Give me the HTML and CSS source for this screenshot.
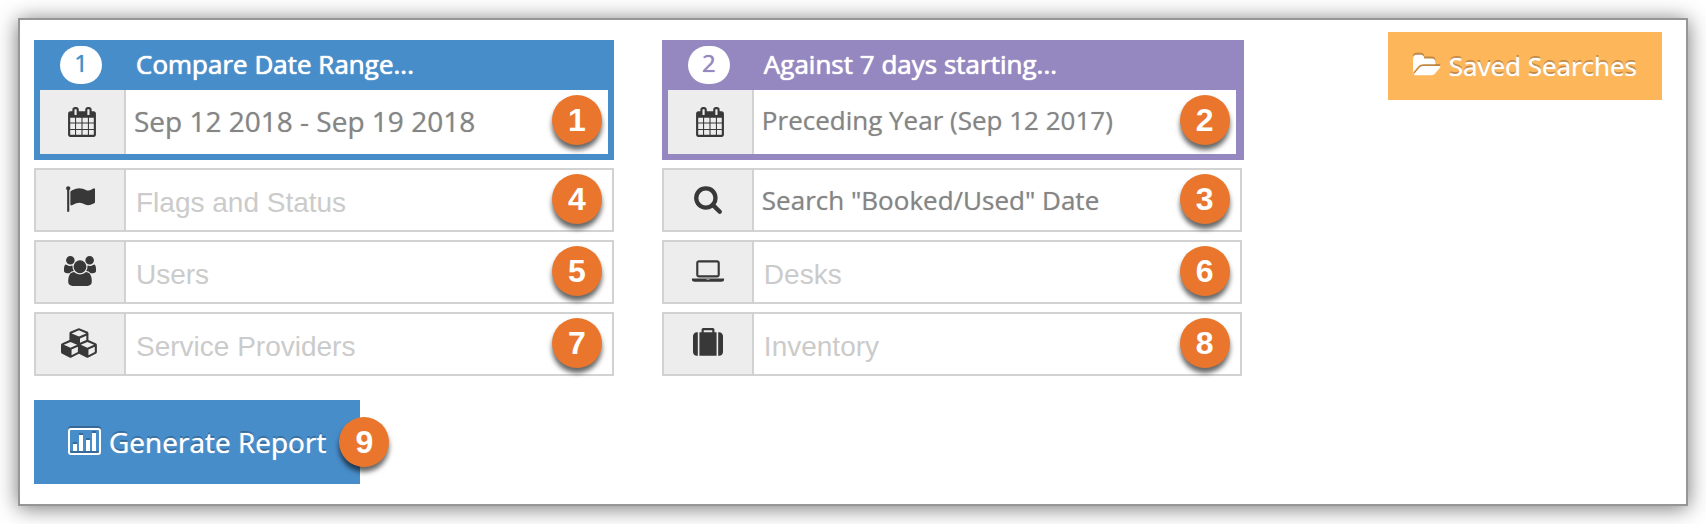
FILE: index.html
```html
<!DOCTYPE html>
<html lang="en">
<head>
<meta charset="utf-8">
<meta name="viewport" content="width=device-width, initial-scale=1">
<title>Compare Report</title>
<link rel="stylesheet" href="styles.css">
</head>
<body>
<svg class="sprite" aria-hidden="true">
  <symbol id="i-calendar" viewBox="0 0 1792 1792"><path d="M192 1664h288v-288h-288v288zm352 0h320v-288h-320v288zm-352-352h288v-320h-288v320zm352 0h320v-320h-320v320zm-352-384h288v-288h-288v288zm736 736h320v-288h-320v288zm-384-736h320v-288h-320v288zm768 736h288v-288h-288v288zm-384-352h320v-320h-320v320zm-352-864v-288q0-13-9.5-22.5t-22.5-9.5h-64q-13 0-22.5 9.5t-9.5 22.5v288q0 13 9.5 22.5t22.5 9.5h64q13 0 22.5-9.5t9.5-22.5zm736 864h288v-320h-288v320zm-384-384h320v-288h-320v288zm384 0h288v-288h-288v288zm32-480v-288q0-13-9.5-22.5t-22.5-9.5h-64q-13 0-22.5 9.5t-9.5 22.5v288q0 13 9.5 22.5t22.5 9.5h64q13 0 22.5-9.5t9.5-22.5zm384-64v1280q0 52-38 90t-90 38h-1408q-52 0-90-38t-38-90v-1280q0-52 38-90t90-38h128v-96q0-66 47-113t113-47h64q66 0 113 47t47 113v96h384v-96q0-66 47-113t113-47h64q66 0 113 47t47 113v96h128q52 0 90 38t38 90z"/></symbol>
  <symbol id="i-flag" viewBox="0 0 1792 1792"><path d="M320 256q0 72-64 110v1266q0 13-9.5 22.5t-22.5 9.5h-64q-13 0-22.5-9.5t-9.5-22.5v-1266q-64-38-64-110 0-53 37.5-90.5t90.5-37.5 90.5 37.5 37.5 90.5zm1472 64v763q0 25-12.5 38.5t-39.5 27.5q-215 116-369 116-61 0-123.5-22t-108.5-48-115.5-48-142.5-22q-192 0-464 146-17 9-33 9-26 0-45-19t-19-45v-742q0-32 31-55 21-14 79-43 236-120 421-120 107 0 200 29t219 88q38 19 88 19 54 0 117.5-21t110-47 88-47 54.5-21q26 0 45 19t19 45z"/></symbol>
  <symbol id="i-search" viewBox="0 0 1792 1792"><path d="M1216 832q0-185-131.5-316.5t-316.5-131.5-316.5 131.5-131.5 316.5 131.5 316.5 316.5 131.5 316.5-131.5 131.5-316.5zm512 832q0 52-38 90t-90 38q-54 0-90-38l-343-342q-179 124-399 124-143 0-273.5-55.5t-225-150-150-225-55.5-273.5 55.5-273.5 150-225 225-150 273.5-55.5 273.5 55.5 225 150 150 225 55.5 273.5q0 220-124 399l343 343q37 37 37 90z"/></symbol>
  <symbol id="i-users" viewBox="0 0 1920 1792"><path d="M593 896q-162 5-265 128h-134q-82 0-138-40.5t-56-118.5q0-353 124-353 6 0 43.500 21t97.500 42.500 119 21.500q67 0 133-23-5 37-5 66 0 139 81 256zm1071 637q0 120-73 189.500t-194 69.500h-874q-121 0-194-69.500t-73-189.500q0-53 3.500-103.500t14-109 26.500-108.500 43-97.500 62-81 85.500-53.500 111.500-20q10 0 43 21.500t73 48 107 48 135 21.500 135-21.500 107-48 73-48 43-21.500q61 0 111.500 20t85.500 53.500 62 81 43 97.500 26.500 108.500 14 109 3.500 103.500zm-1024-1277q0 106-75 181t-181 75-181-75-75-181 75-181 181-75 181 75 75 181zm704 384q0 159-112.500 271.500t-271.500 112.500-271.500-112.500-112.500-271.500 112.500-271.500 271.500-112.500 271.500 112.500 112.500 271.500zm576 225q0 78-56 118.500t-138 40.500h-134q-103-123-265-128 81-117 81-256 0-29-5-66 66 23 133 23 59 0 119-21.500t97.500-42.500 43.500-21q124 0 124 353zm-128-609q0 106-75 181t-181 75-181-75-75-181 75-181 181-75 181 75 75 181z"/></symbol>
  <symbol id="i-laptop" viewBox="0 0 1920 1792"><path d="M416 1280q-66 0-113-47t-47-113v-704q0-66 47-113t113-47h1088q66 0 113 47t47 113v704q0 66-47 113t-113 47h-1088zm-32-864v704q0 13 9.500 22.500t22.500 9.500h1088q13 0 22.500-9.500t9.500-22.500v-704q0-13-9.500-22.500t-22.500-9.500h-1088q-13 0-22.500 9.500t-9.500 22.500zm1376 928h160v96q0 40-47 68t-113 28h-1600q-66 0-113-28t-47-68v-96h1760zm-720 96q16 0 16-16t-16-16h-160q-16 0-16 16t16 16h160z"/></symbol>
  <symbol id="i-cubes" viewBox="0 0 2304 1792"><path d="M640 1632l384-192v-314l-384 164v342zm-64-454l404-173-404-173-404 173zm1088 454l384-192v-314l-384 164v342zm-64-454l404-173-404-173-404 173zm-448-293l384-165v-266l-384 164v267zm-64-379l441-189-441-189-441 189zm1088 518v416q0 36-19 67t-52 47l-448 224q-25 14-57 14t-57-14l-448-224q-5-2-7-4-2 2-7 4l-448 224q-25 14-57 14t-57-14l-448-224q-33-16-52-47t-19-67v-416q0-38 21.500-70t56.500-48l434-186v-400q0-38 21.500-70t56.500-48l448-192q23-10 50-10t50 10l448 192q35 16 56.500 48t21.500 70v400l434 186q36 16 57 48t21 70z"/></symbol>
  <symbol id="i-suitcase" viewBox="0 0 1792 1792"><path d="M640 256h512v-128h-512v128zm-352 0v1408h-64q-92 0-158-66t-66-158v-960q0-92 66-158t158-66h64zm1120 0v1408h-1024v-1408h128v-160q0-40 28-68t68-28h576q40 0 68 28t28 68v160h128zm384 224v960q0 92-66 158t-158 66h-64v-1408h64q92 0 158 66t66 158z"/></symbol>
  <symbol id="i-folder" viewBox="0 0 1920 1792"><path d="M1879 952q0 31-31 66l-336 396q-43 51-120.500 86.500t-143.500 35.500h-1088q-34 0-60.500-13t-26.500-43q0-31 31-66l336-396q43-51 120.500-86.500t143.500-35.500h1088q34 0 60.500 13t26.500 43zm-343-344v160h-832q-94 0-197 47.500t-164 119.500l-337 396-5 6q0-4-.5-12.500t-.5-12.500v-960q0-92 66-158t158-66h320q92 0 158 66t66 158v32h544q92 0 158 66t66 158z"/></symbol>
  <symbol id="i-chart" viewBox="0 0 33 28"><rect x="1" y="1" width="31" height="25" rx="2" fill="none" stroke="currentColor" stroke-width="2"/><path d="M5 16h4v7H5zM11 7h4v16h-4zM18 12h4v11h-4zM24 5h4v18h-4z"/></symbol>
</svg>

<main class="panel">
  <form class="report">
    <div class="filters">
      <section class="range range--compare">
        <h2 class="range-head"><span class="step">1</span><span>Compare Date Range...</span></h2>
        <div class="field">
          <label class="addon" for="dates"><svg class="icon"><use href="#i-calendar"/></svg></label>
          <input class="control control--date" id="dates" type="text" aria-label="Date range" value="Sep 12 2018 - Sep 19 2018">
          <span class="badge">1</span>
        </div>
      </section>
      <section class="range range--against">
        <h2 class="range-head"><span class="step">2</span><span>Against 7 days starting...</span></h2>
        <div class="field">
          <label class="addon" for="against"><svg class="icon"><use href="#i-calendar"/></svg></label>
          <select class="control control--select" id="against" aria-label="Against"><option>Preceding Year (Sep 12 2017)</option></select>
          <span class="badge">2</span>
        </div>
      </section>
      <div class="field field--boxed">
        <label class="addon" for="flags"><svg class="icon"><use href="#i-flag"/></svg></label>
        <input class="control" id="flags" type="text" aria-label="Flags and Status" placeholder="Flags and Status">
        <span class="badge">4</span>
      </div>
      <div class="field field--boxed">
        <label class="addon" for="datetype"><svg class="icon"><use href="#i-search"/></svg></label>
        <select class="control control--select" id="datetype" aria-label="Search date"><option>Search "Booked/Used" Date</option></select>
        <span class="badge">3</span>
      </div>
      <div class="field field--boxed">
        <label class="addon" for="users"><svg class="icon icon--wide"><use href="#i-users"/></svg></label>
        <input class="control" id="users" type="text" aria-label="Users" placeholder="Users">
        <span class="badge">5</span>
      </div>
      <div class="field field--boxed">
        <label class="addon" for="desks"><svg class="icon icon--wide"><use href="#i-laptop"/></svg></label>
        <input class="control" id="desks" type="text" aria-label="Desks" placeholder="Desks">
        <span class="badge">6</span>
      </div>
      <div class="field field--boxed">
        <label class="addon" for="providers"><svg class="icon icon--widest"><use href="#i-cubes"/></svg></label>
        <input class="control" id="providers" type="text" aria-label="Service Providers" placeholder="Service Providers">
        <span class="badge">7</span>
      </div>
      <div class="field field--boxed">
        <label class="addon" for="inventory"><svg class="icon"><use href="#i-suitcase"/></svg></label>
        <input class="control" id="inventory" type="text" aria-label="Inventory" placeholder="Inventory">
        <span class="badge">8</span>
      </div>
    </div>
    <div class="submit">
      <button class="btn btn--primary" type="submit"><svg class="icon-chart"><use href="#i-chart"/></svg>Generate Report</button>
      <span class="badge badge--edge">9</span>
    </div>
  </form>
  <button class="btn btn--saved" type="button"><svg class="icon-folder"><use href="#i-folder"/></svg>Saved Searches</button>
</main>
</body>
</html>
```
FILE: styles.css
```css
* { box-sizing: border-box; }

body {
  margin: 0;
  padding: 18px;
  background: #fff;
  font-family: "Open Sans", "Noto Sans", sans-serif;
  font-size: 26px;
}

.sprite { display: none; }

svg { fill: currentColor; flex: none; }

.panel {
  display: flex;
  align-items: flex-start;
  justify-content: space-between;
  gap: 146px;
  padding: 12px 24px 20px 14px;
  border: 2px solid #969696;
  background: #fff;
  box-shadow: 0 2px 20px rgba(0, 0, 0, 0.55);
}

.report {
  flex: 1;
  min-width: 0;
  padding-top: 8px;
}

.filters {
  display: grid;
  grid-template-columns: 1fr 1fr;
  gap: 8px 48px;
}

.range {
  border: 6px solid;
  border-top: 0;
}

.range--compare { border-color: #478dca; background: #478dca; color: #478dca; }

.range--against {
  margin-right: -2px;
  border-color: #9587bf;
  border-right-width: 8px;
  background: #9587bf;
  color: #9587bf;
}

.range-head {
  display: flex;
  align-items: center;
  gap: 34px;
  height: 50px;
  margin: 0;
  padding: 0 0 2px 20px;
  color: #fff;
  font-size: 26px;
  font-weight: 500;
  text-shadow: 0 0 1px currentColor, 0 0 1px currentColor;
}

.step {
  width: 42px;
  height: 38px;
  margin-top: 2px;
  border-radius: 19px;
  background: #fff;
  font-size: 24px;
  line-height: 34px;
  text-align: center;
  text-shadow: 0 0 1px currentColor;
}

.range--compare .step { color: #478dca; }
.range--against .step { color: #9587bf; }

.field {
  position: relative;
  display: flex;
  height: 64px;
  background: #fff;
}

.field--boxed { border: 2px solid #d2d2d2; }

.addon {
  display: flex;
  align-items: center;
  justify-content: center;
  flex: none;
  width: 86px;
  border-right: 2px solid #d2d2d2;
  background: #ededed;
  color: #383838;
}

.field--boxed .addon {
  width: 90px;
  padding-bottom: 2px;
}

.icon { width: 30px; height: 30px; }
.icon--wide { width: 34px; }
.icon--widest { width: 38px; }

.control {
  flex: 1;
  min-width: 0;
  padding: 4px 70px 0 10px;
  border: 0;
  outline: 0;
  appearance: none;
  background: transparent;
  color: #858585;
  font: inherit;
  text-shadow: 0 0 1px rgba(133, 133, 133, 0.6);
}

.control:placeholder-shown { text-shadow: none; }

.control--date { padding: 0 70px 2px 8px; font-size: 28px; }
.control--select { padding: 0 70px 4px 8px; }
.field--boxed .control--select { padding-bottom: 0; }

.control::placeholder {
  color: #cbcbcb;
  font-family: "Liberation Sans", Arial, sans-serif;
  font-size: 28px;
  opacity: 1;
}

.badge {
  position: absolute;
  top: 5px;
  right: 6px;
  width: 50px;
  height: 50px;
  border-radius: 50%;
  background: #ea762d;
  box-shadow: 0 5px 5px rgba(0, 0, 0, 0.6);
  color: #fff;
  font-family: "Liberation Sans", Arial, sans-serif;
  font-size: 32px;
  font-weight: 700;
  line-height: 50px;
  text-align: center;
}

.field--boxed .badge { top: 4px; right: 10px; }

.submit {
  position: relative;
  width: fit-content;
  margin-top: 24px;
}

.submit .badge--edge { top: 17px; right: -29px; }

.btn {
  display: flex;
  align-items: center;
  gap: 8px;
  border: 0;
  color: #fff;
  font: inherit;
  font-size: 28px;
  text-shadow: 0 0 1px #fff, 0 -2px 0 rgba(0, 0, 0, 0.25);
  white-space: nowrap;
}

.btn--primary {
  height: 84px;
  padding: 0 34px;
  background: #478dca;
}

.btn--saved {
  flex: none;
  height: 68px;
  padding: 0 25px;
  background: #feb65b;
  font-size: 26px;
}

.icon-chart,
.icon-folder { filter: drop-shadow(0 -2px 0 rgba(0, 0, 0, 0.25)); }

.icon-chart { width: 33px; height: 28px; }
.icon-folder { width: 28px; height: 28px; }
```
